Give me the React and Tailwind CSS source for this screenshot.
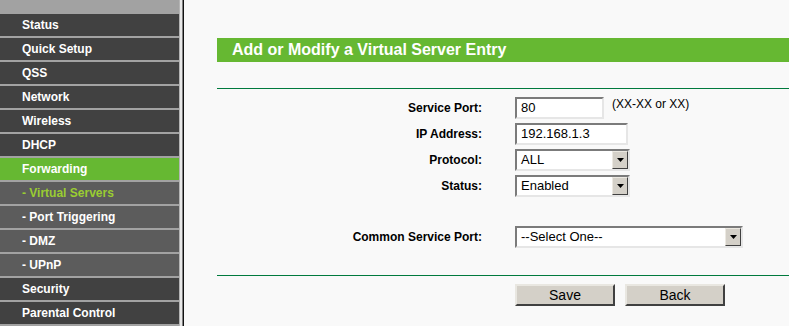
import React from "react";

const font = { fontFamily: '"Liberation Sans", Arial, sans-serif' };

const menu = [
  { t: "Status", k: "main" },
  { t: "Quick Setup", k: "main" },
  { t: "QSS", k: "main" },
  { t: "Network", k: "main" },
  { t: "Wireless", k: "main" },
  { t: "DHCP", k: "main" },
  { t: "Forwarding", k: "active" },
  { t: "- Virtual Servers", k: "subactive" },
  { t: "- Port Triggering", k: "sub" },
  { t: "- DMZ", k: "sub" },
  { t: "- UPnP", k: "sub" },
  { t: "Security", k: "main" },
  { t: "Parental Control", k: "main" },
];

function MenuItem({ t, k }) {
  const cls =
    k === "active"
      ? "bg-[#66b832] text-white"
      : k === "subactive"
      ? "bg-[#5c5c5c] text-[#9acd32]"
      : k === "sub"
      ? "bg-[#5c5c5c] text-white"
      : "bg-[#414141] text-white";
  return (
    <div className={`h-[22px] mb-[2px] flex items-center pl-[22px] text-[12px] font-bold ${cls}`}>
      {t}
    </div>
  );
}

function TextBox({ w, value }) {
  return (
    <div
      className={`h-[22px] ${w} border-2 border-t-[#7b7b7b] border-l-[#7b7b7b] border-r-[#e6e6e6] border-b-[#e6e6e6] bg-white pl-[4px] text-[13px] leading-[18px] text-black`}
    >
      {value}
    </div>
  );
}

function Select({ w, value, h = "h-[22px]" }) {
  return (
    <div
      className={`${h} ${w} flex border-2 border-t-[#7b7b7b] border-l-[#7b7b7b] border-r-[#e6e6e6] border-b-[#e6e6e6] bg-white text-[13px] text-black`}
    >
      <div className="flex-1 pl-[4px] leading-[18px]">{value}</div>
      <div className="w-[16px] h-full flex items-center justify-center bg-[#d4d0c8] border border-t-[#ece9e2] border-l-[#ece9e2] border-r-[#404040] border-b-[#404040]">
        <svg width="7" height="4" viewBox="0 0 7 4">
          <path d="M0 0 H7 L3.5 4 Z" fill="#000" />
        </svg>
      </div>
    </div>
  );
}

function Row({ label, children, className = "" }) {
  return (
    <div className={`h-[26px] flex items-center ${className}`}>
      <div className="w-[265px] text-right text-[12px] font-bold text-black pr-0">{label}</div>
      <div className="ml-[33px] flex items-center">{children}</div>
    </div>
  );
}

function Button({ children }) {
  return (
    <div className="w-[100px] h-[22px] flex items-center justify-center bg-[#d4d0c8] border-2 border-t-[#e9e7e1] border-l-[#e9e7e1] border-r-[#404040] border-b-[#404040] text-[14px] text-black">
      {children}
    </div>
  );
}

export default function App() {
  return (
    <div className="w-[789px] h-[326px] overflow-hidden flex bg-[#f9f9f9]" style={font}>
      <div className="w-[179px] shrink-0 bg-[#a2a2a2] pt-[14px]">
        {menu.map((m) => (
          <MenuItem key={m.t} {...m} />
        ))}
      </div>
      <div className="w-[1px] bg-[#b4b4b4]" />
      <div className="w-[2px] bg-[#e8e8e8]" />
      <div className="w-[1px] bg-[#808080]" />
      <div className="w-[1px] bg-[#111]" />
      <div className="flex-1 pl-[33px] pt-[38px]">
        <div className="h-[24px] bg-[#66b832] flex items-center pl-[15px] text-[16px] font-bold text-white">
          Add or Modify a Virtual Server Entry
        </div>
        <div className="mt-[26px] h-[1px] bg-[#007a3d]" />
        <div className="pt-[6px]">
          <Row label="Service Port:">
            <TextBox w="w-[89px]" value="80" />
            <span className="ml-[8px] text-[12px] text-black self-start -mt-[2px]">(XX-XX or XX)</span>
          </Row>
          <Row label="IP Address:">
            <TextBox w="w-[113px]" value="192.168.1.3" />
          </Row>
          <Row label="Protocol:">
            <Select w="w-[115px]" value="ALL" />
          </Row>
          <Row label="Status:">
            <Select w="w-[115px]" value="Enabled" />
          </Row>
          <Row label="Common Service Port:" className="mt-[25px]">
            <Select w="w-[228px]" value="--Select One--" />
          </Row>
        </div>
        <div className="mt-[25px] h-[1px] bg-[#007a3d]" />
        <div className="mt-[8px] flex pl-[298px] gap-[10px]">
          <Button>Save</Button>
          <Button>Back</Button>
        </div>
      </div>
    </div>
  );
}
